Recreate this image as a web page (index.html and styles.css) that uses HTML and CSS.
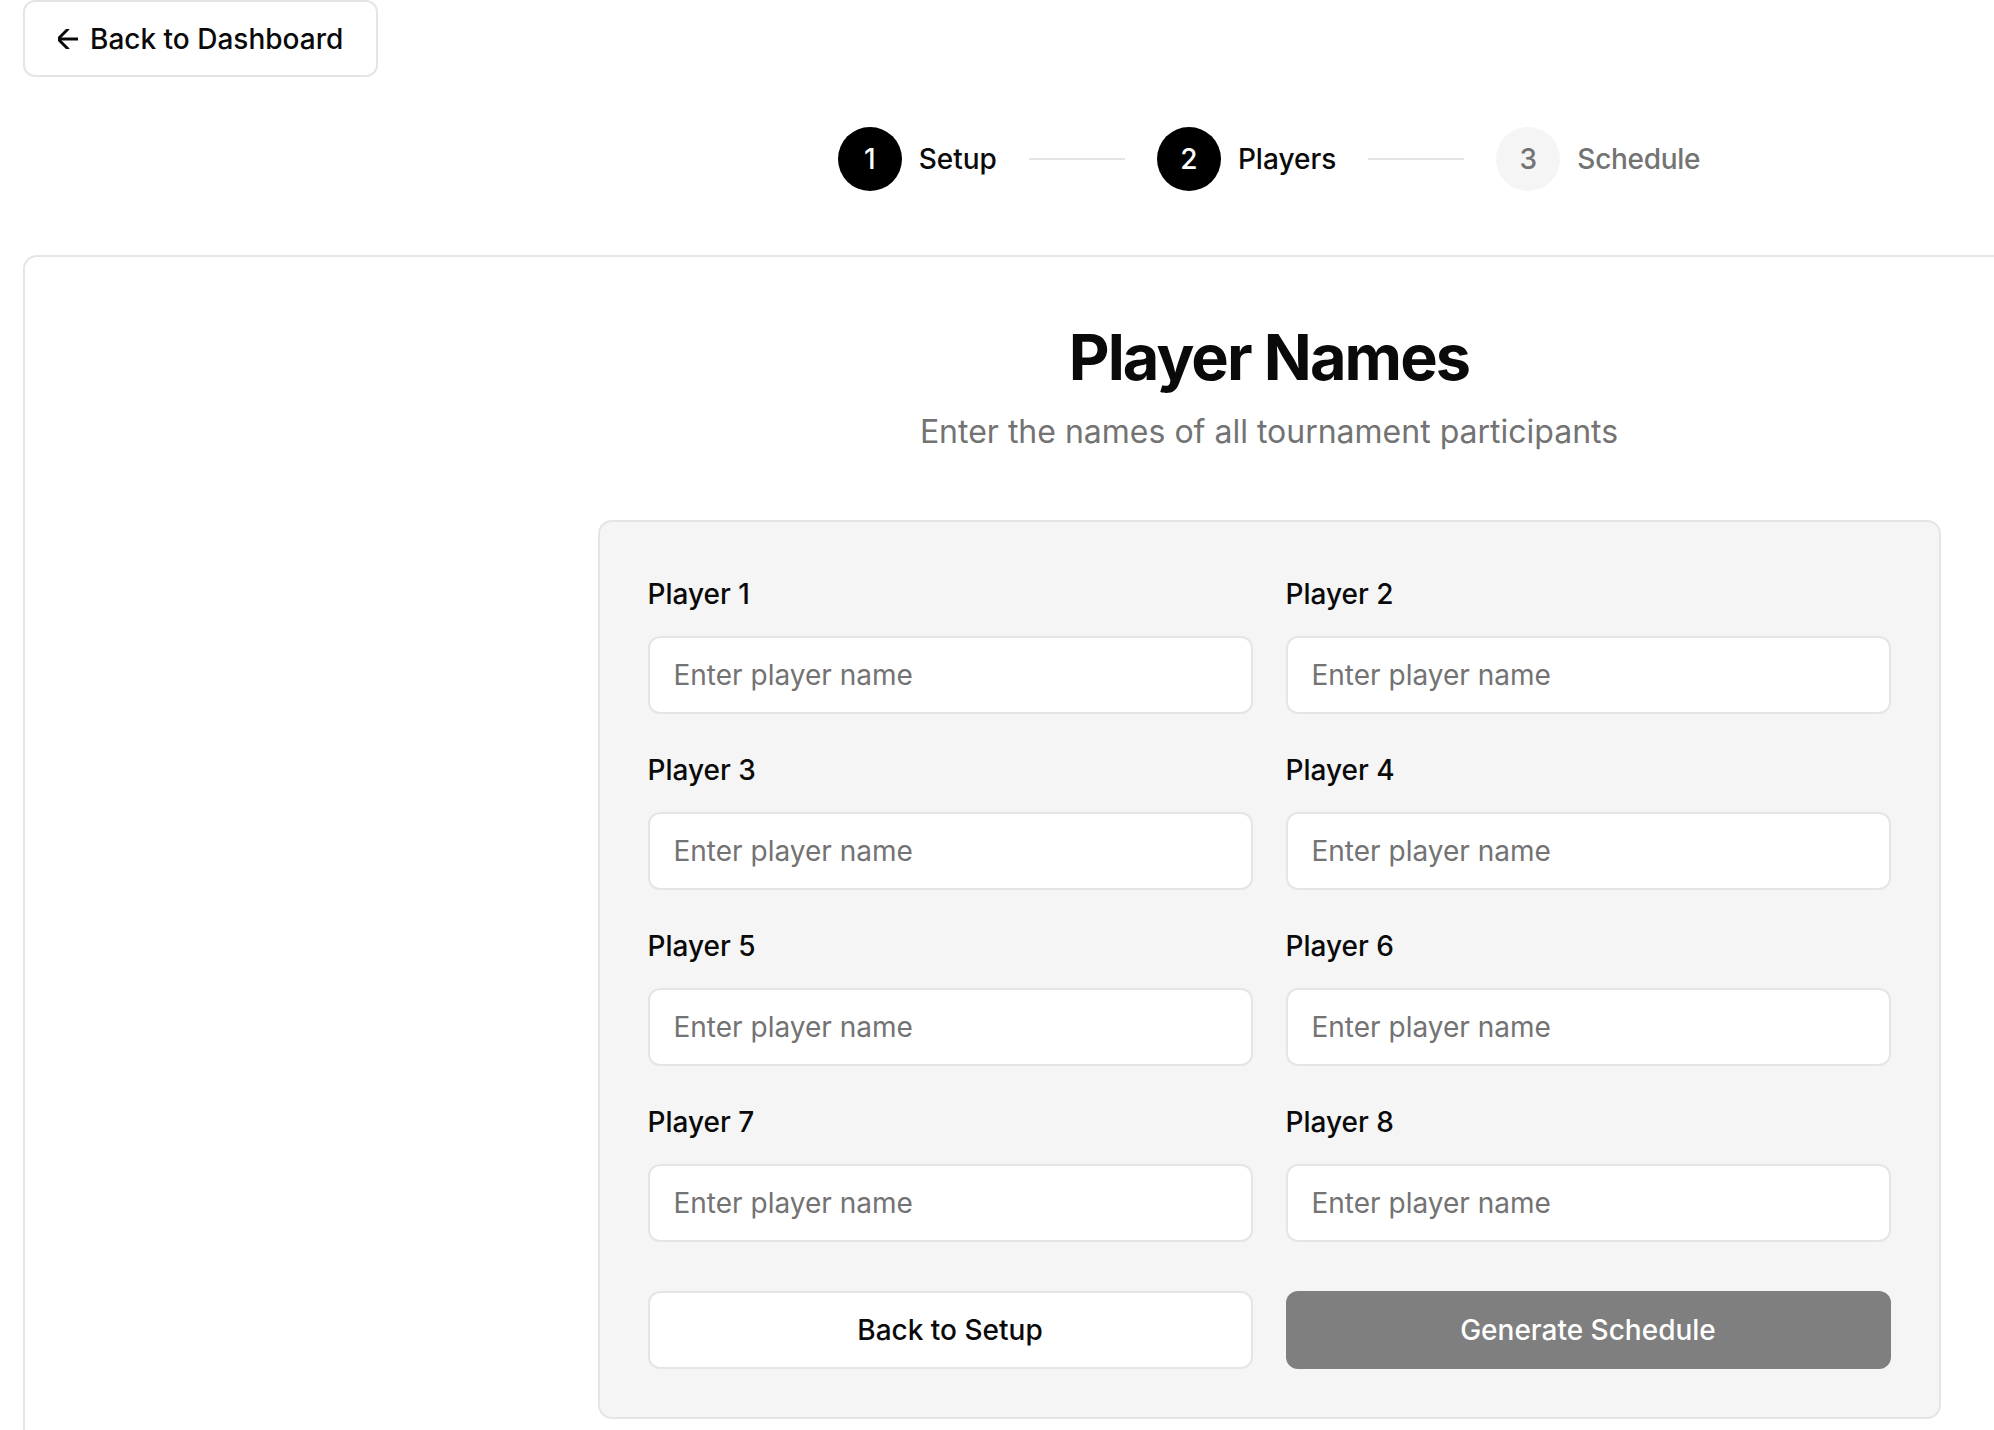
FILE: index.html
```html
<!DOCTYPE html>
<html lang="en">
<head>
<meta charset="utf-8">
<title>Player Names</title>
<link rel="stylesheet" href="styles.css">
</head>
<body>
<div class="page">
  <div class="topbar">
    <button class="back-btn" type="button">
      <svg class="back-icon" viewBox="5 5 14 14" fill="none" stroke="currentColor" stroke-width="2" stroke-linecap="round" stroke-linejoin="round"><path d="M12 19l-7-7 7-7"/><path d="M19 12H5"/></svg>
      <span>Back to Dashboard</span>
    </button>
  </div>

  <nav class="steps">
    <div class="step done"><span class="step-num">1</span><span class="step-label">Setup</span></div>
    <div class="step-line"></div>
    <div class="step done"><span class="step-num">2</span><span class="step-label">Players</span></div>
    <div class="step-line"></div>
    <div class="step pending"><span class="step-num">3</span><span class="step-label">Schedule</span></div>
  </nav>

  <main class="card">
    <h1 class="title">Player Names</h1>
    <p class="subtitle">Enter the names of all tournament participants</p>

    <form class="form-card">
      <div class="grid">
        <div class="field"><label>Player 1</label><input type="text" placeholder="Enter player name"></div>
        <div class="field"><label>Player 2</label><input type="text" placeholder="Enter player name"></div>
        <div class="field"><label>Player 3</label><input type="text" placeholder="Enter player name"></div>
        <div class="field"><label>Player 4</label><input type="text" placeholder="Enter player name"></div>
        <div class="field"><label>Player 5</label><input type="text" placeholder="Enter player name"></div>
        <div class="field"><label>Player 6</label><input type="text" placeholder="Enter player name"></div>
        <div class="field"><label>Player 7</label><input type="text" placeholder="Enter player name"></div>
        <div class="field"><label>Player 8</label><input type="text" placeholder="Enter player name"></div>
      </div>
      <div class="actions">
        <button type="button" class="btn btn-outline">Back to Setup</button>
        <button type="button" class="btn btn-primary" disabled>Generate Schedule</button>
      </div>
    </form>
  </main>
</div>
</body>
</html>
```

FILE: styles.css
```css
html, body {
  margin: 0;
  padding: 0;
  overflow: hidden;
  background: #ffffff;
}

body {
  font-family: Inter, "Noto Sans", "Liberation Sans", sans-serif;
  color: #0a0a0a;
}

.page {
  width: 2538px;
  box-sizing: border-box;
  padding: 0 23px;
}

.topbar {
  display: flex;
}

.back-btn {
  display: flex;
  align-items: center;
  gap: 12px;
  height: 77px;
  padding: 0 33px;
  box-sizing: border-box;
  background: #ffffff;
  border: 2px solid #e5e5e5;
  border-radius: 12px;
  font-family: inherit;
  font-size: 28px;
  font-weight: 500;
  color: #0a0a0a;
}

.back-icon {
  width: 20px;
  height: 20px;
  flex: none;
}

.steps {
  display: flex;
  align-items: center;
  justify-content: center;
  gap: 32px;
  margin-top: 50px;
  height: 64px;
}

.step {
  display: flex;
  align-items: center;
  gap: 17px;
}

.step-num {
  width: 64px;
  height: 64px;
  border-radius: 50%;
  display: flex;
  align-items: center;
  justify-content: center;
  font-size: 28px;
  font-weight: 500;
}

.step-label {
  font-size: 28px;
  font-weight: 500;
}

.step.done .step-num {
  background: #000000;
  color: #ffffff;
}

.step.done .step-label {
  color: #0a0a0a;
}

.step.pending .step-num {
  background: #f5f5f5;
  color: #737373;
}

.step.pending .step-label {
  color: #737373;
  letter-spacing: -0.01em;
}

.step-line {
  width: 96px;
  height: 2px;
  background: #e5e5e5;
}

.card {
  margin-top: 64px;
  border: 2px solid #e5e5e5;
  border-radius: 14px;
  background: #ffffff;
  padding: 62px 48px 200px;
  min-height: 1400px;
  box-sizing: border-box;
}

.title {
  margin: 0;
  text-align: center;
  font-size: 63px;
  line-height: 76px;
  font-weight: 700;
  letter-spacing: -0.03em;
  color: #0a0a0a;
}

.subtitle {
  margin: 13px 0 0;
  text-align: center;
  font-size: 32px;
  line-height: 47px;
  color: #737373;
}

.form-card {
  width: 1343px;
  box-sizing: border-box;
  margin: 65px auto 0;
  background: #f5f5f5;
  border: 2px solid #e5e5e5;
  border-radius: 14px;
  padding: 51px 48px 48px;
}

.grid {
  display: grid;
  grid-template-columns: 1fr 1fr;
  column-gap: 33px;
  row-gap: 35px;
}

.field {
  display: flex;
  flex-direction: column;
  gap: 21px;
}

.field label {
  font-size: 28px;
  line-height: 42px;
  font-weight: 500;
  color: #0a0a0a;
}

.field input {
  height: 78px;
  box-sizing: border-box;
  border: 2px solid #e5e5e5;
  border-radius: 12px;
  background: #ffffff;
  padding: 0 24px;
  font-family: inherit;
  font-size: 28px;
  color: #0a0a0a;
  outline: none;
}

.field input::placeholder {
  color: #737373;
}

.actions {
  display: grid;
  grid-template-columns: 1fr 1fr;
  column-gap: 33px;
  margin-top: 49px;
}

.btn {
  height: 78px;
  box-sizing: border-box;
  border-radius: 12px;
  font-family: inherit;
  font-size: 28px;
  font-weight: 500;
}

.btn-outline {
  background: #ffffff;
  border: 2px solid #e5e5e5;
  color: #0a0a0a;
}

.btn-primary {
  background: #7f7f7f;
  border: none;
  color: #ffffff;
}
```
